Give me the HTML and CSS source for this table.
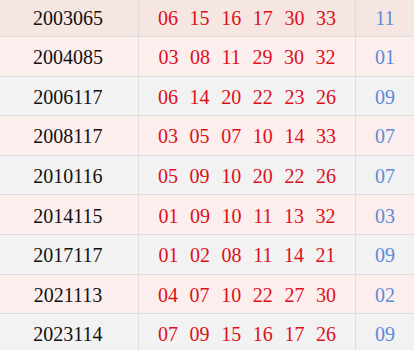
FILE: index.html
```html
<!DOCTYPE html>
<html lang="zh">
<head>
  <meta charset="UTF-8">
  <meta name="viewport" content="width=device-width, initial-scale=1.0">
  <title>开奖记录</title>
  <link rel="stylesheet" href="styles.css">
</head>
<body>
  <div class="list" id="list"></div>

  <script>
    const data = [
      ["2003065", ["06", "15", "16", "17", "30", "33"], "11"],
      ["2004085", ["03", "08", "11", "29", "30", "32"], "01"],
      ["2006117", ["06", "14", "20", "22", "23", "26"], "09"],
      ["2008117", ["03", "05", "07", "10", "14", "33"], "07"],
      ["2010116", ["05", "09", "10", "20", "22", "26"], "07"],
      ["2014115", ["01", "09", "10", "11", "13", "32"], "03"],
      ["2017117", ["01", "02", "08", "11", "14", "21"], "09"],
      ["2021113", ["04", "07", "10", "22", "27", "30"], "02"],
      ["2023114", ["07", "09", "15", "16", "17", "26"], "09"]
    ];

    const list = document.getElementById("list");
    data.forEach(function (item, i) {
      const row = document.createElement("div");
      row.className = "row " + (i === 0 ? "first" : (i % 2 ? "pink" : "gray"));
      const reds = item[1].map(function (n) { return "<span>" + n + "</span>"; }).join("");
      row.innerHTML =
        '<div class="cell issue">' + item[0] + '</div>' +
        '<div class="cell reds">' + reds + '</div>' +
        '<div class="cell blue">' + item[2] + '</div>';
      list.appendChild(row);
    });
  </script>
</body>
</html>
```

FILE: styles.css
```css
* { box-sizing: border-box; margin: 0; padding: 0; }
body {
  font-family: 'Liberation Serif', 'Noto Sans CJK SC', serif;
  font-size: 20px;
  background: #f2f2f2;
  color: #111;
  overflow: hidden;
}
.list {
  margin-top: -2.6px;
}
.row {
  display: grid;
  grid-template-columns: 139px 217px 58px;
  height: 39.6px;
  border-bottom: 1px solid #dddddd;
}
.row.first { background: #f5e6e2; }
.row.pink { background: #fdeeee; }
.row.gray { background: #f2f2f2; }
.cell {
  display: flex;
  align-items: center;
  justify-content: center;
  padding-top: 3px;
  border-right: 1px solid #dddddd;
}
.cell.blue { border-right: none; color: #5b8bd9; }
.issue { padding-right: 2px; }
.reds {
  color: #dd0f1a;
  gap: 11.6px;
}
```
